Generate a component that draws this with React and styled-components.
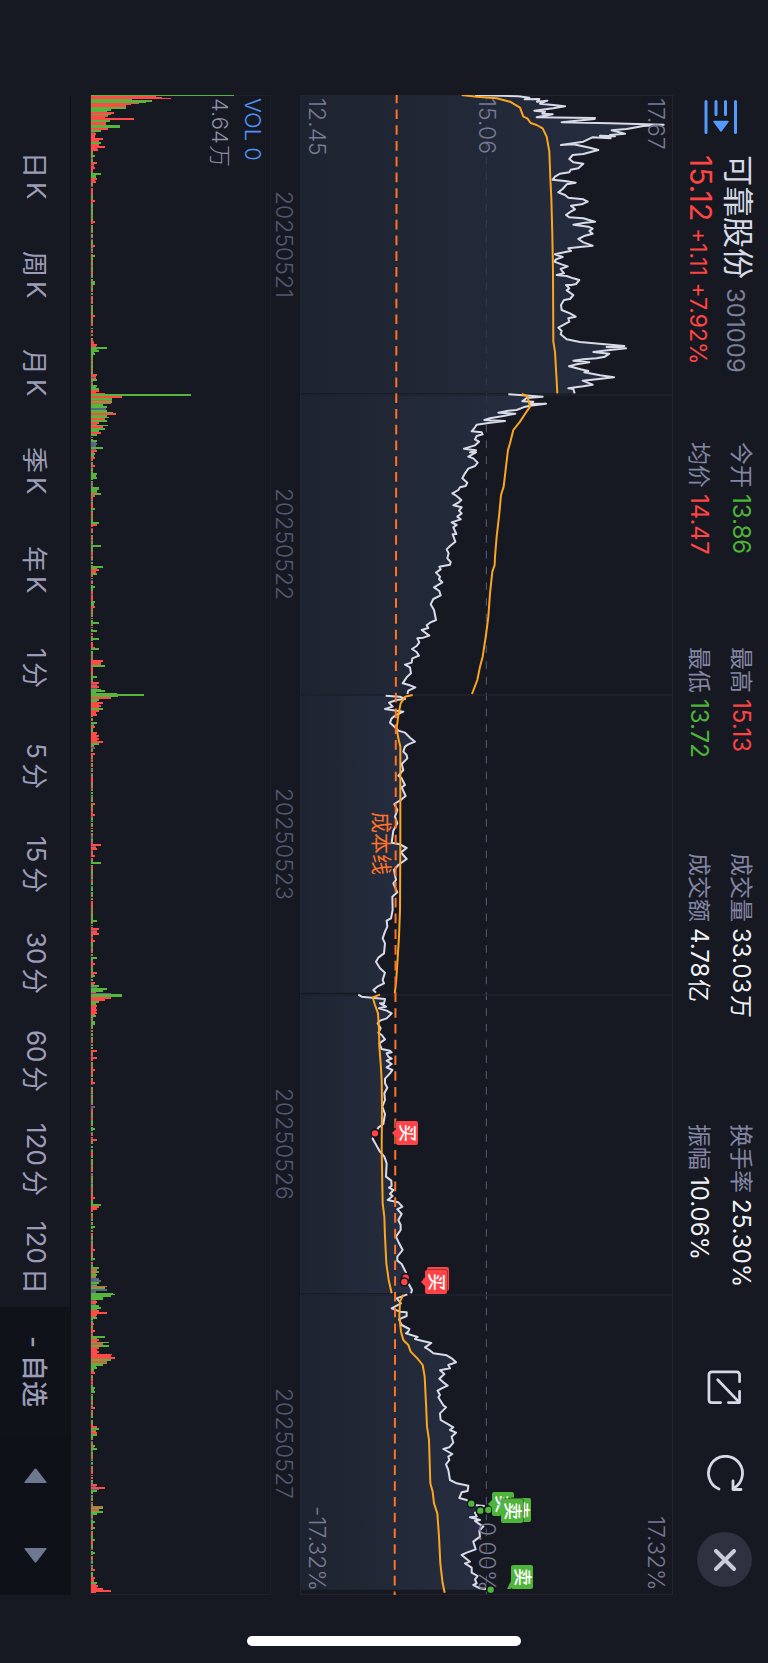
import React from 'react';
import styled, { createGlobalStyle } from 'styled-components';

const GlobalStyle = createGlobalStyle`
  * {
    box-sizing: border-box;
  }

  body {
    margin: 0;
    background: #161922;
  }

  button {
    margin: 0;
    padding: 0;
    border: 0;
    background: none;
    color: inherit;
    font: inherit;
    writing-mode: inherit;
    text-orientation: inherit;
    cursor: pointer;
  }
`;

/* The whole screen reads sideways, the top of the app is the right edge */
const Screen = styled.main`
  position: relative;
  display: flex;
  flex-direction: column;
  width: 100%;
  height: 100vh;
  min-height: 1200px;
  padding: 95px 0 68px;
  overflow: hidden;
  background: #161922;
  color: #d6d9e6;
  font-family: Inter, 'Noto Sans CJK SC', sans-serif;
  writing-mode: vertical-rl;
  text-orientation: sideways;
`;

const Header = styled.header`
  display: flex;
  width: 95px;
  flex: none;
  padding: 5px 0 8px;
`;

const MenuButton = styled.button`
  height: 34px;
  flex: none;

  svg {
    display: block;
  }
`;

const Quote = styled.div`
  height: 287px;
  flex: none;
  margin-top: 21px;
  padding-right: 12px;
  white-space: nowrap;
`;

const QuoteName = styled.h1`
  margin: 0;
  font-size: 31px;
  font-weight: 400;
  line-height: 36px;
`;

const Code = styled.span`
  margin-top: 9px;
  color: #7d7f99;
  font-size: 24px;
`;

const Price = styled.p`
  margin: 0;
  color: #ff4444;
  font-size: 30px;
  line-height: 32px;
`;

const Change = styled.span`
  margin-top: 7px;
  font-size: 23px;
`;

const Stats = styled.dl`
  display: grid;
  flex: 1;
  grid-template-columns: 205fr 206fr 270fr 236fr;
  grid-template-rows: repeat(2, 42px);
  grid-auto-flow: column;
  margin: 0;
  padding-right: 6px;
  line-height: 42px;
  white-space: nowrap;
`;

const Stat = styled.div`
  display: flex;
  gap: 6px;
`;

const StatLabel = styled.dt`
  color: #8486a3;
  font-size: 23px;
`;

const tones = { up: '#ff4444', down: '#4db436', plain: '#f2f2f5' };

const StatValue = styled.dd`
  display: flex;
  gap: 1px;
  margin: 0;
  color: ${(props) => tones[props.$tone]};
  font-size: 24px;
`;

const StatUnit = styled.span`
  font-size: 23px;
`;

const Actions = styled.div`
  display: flex;
  flex: none;
  gap: 31px;
  padding-right: 16px;
`;

const ActionButton = styled.button`
  display: grid;
  place-items: center;
  width: 55px;
  height: 55px;
  border-radius: 50%;
  background: ${(props) => (props.$filled ? '#2f3040' : 'none')};
`;

const ChartPanel = styled.section`
  position: relative;
  flex: 373 0 0;
  min-width: 0;

  svg {
    display: block;
    width: 100%;
    height: 100%;
  }
`;

const AxisLabel = styled.span`
  position: absolute;
  right: ${(props) => props.$right};
  ${(props) => (props.$end ? 'bottom: 4px' : 'top: 3px')};
  color: #787b93;
  font-size: 23px;
  font-weight: 300;
  line-height: 28px;
`;

const CostLabel = styled.span`
  position: absolute;
  left: 18.6%;
  top: 47.8%;
  color: #ff7326;
  font-size: 21px;
  line-height: 24px;
`;

const Tag = styled.span`
  position: absolute;
  left: ${(props) => (props.$x / 373) * 100}%;
  top: ${(props) => (props.$y / 1500) * 100}%;
  width: 22px;
  height: 24px;
  border-radius: 2px;
  background: ${(props) => (props.$side === '买' ? '#ff4448' : '#4fb43a')};
  box-shadow: 0 0 0 1px #16192266;
  color: #fff;
  font-size: 18px;
  font-weight: 500;
  line-height: 22px;
  text-align: center;

  &::before {
    content: '';
    position: absolute;
    right: 100%;
    top: ${(props) => (props.$corner ? '16px' : '8px')};
    border: 4px solid transparent;
    border-left: 0;
    border-right-color: ${(props) => (props.$side === '买' ? '#ff4448' : '#4fb43a')};
    ${(props) => props.$corner && 'border-bottom: 0; border-top-width: 8px;'}
  }
`;

const DateAxis = styled.ol`
  display: flex;
  width: 29px;
  flex: none;
  margin: 0;
  padding: 0 2px 2px 0;
  list-style: none;
  color: #555870;
  font-size: 23px;
  font-weight: 300;
  line-height: 28px;
`;

const DateItem = styled.li`
  flex: 1;
  text-align: center;
`;

const VolumePanel = styled.section`
  position: relative;
  flex: 181 0 0;
  min-width: 0;
  box-shadow: inset 0 0 0 1px #1e212d;

  svg {
    display: block;
    width: 100%;
    height: 100%;
  }
`;

const VolumeInfo = styled.div`
  position: absolute;
  top: 3px;
  right: 2px;
  color: #8e90a8;
  font-size: 22px;
  font-weight: 300;
  line-height: 33px;
`;

const VolumeName = styled.div`
  color: #4f93f5;
`;

const VolumeScale = styled.div`
  display: flex;
  gap: 1px;
`;

const PeriodBar = styled.nav`
  display: flex;
  width: 71px;
  flex: none;
  margin-right: 19px;
  border-right: 1px solid #0e1016;
  color: #9b9db8;
  font-size: 26px;
`;

const Periods = styled.div`
  display: flex;
  flex: 1180 0 0;
  margin-top: 32px;
`;

const Period = styled.button`
  display: flex;
  flex: 1 0 0;
  align-items: center;
  justify-content: center;
  gap: 4px;
  padding-left: 3px;
  white-space: nowrap;
`;

const Watchlist = styled.button`
  flex: 128 0 0;
  padding-left: 3px;
  background: #101219;
  font-weight: 500;
  white-space: nowrap;
`;

const StepButton = styled.button`
  display: grid;
  flex: 80 0 0;
  place-items: center;
  background: #0f1118;
`;

const HomeIndicator = styled.div`
  position: absolute;
  bottom: 17px;
  left: 50%;
  width: 274px;
  height: 10px;
  margin-left: -137px;
  border-radius: 5px;
  background: #fff;
`;

const stats = [
  { label: '今开', value: '13.86', tone: 'down' },
  { label: '均价', value: '14.47', tone: 'up' },
  { label: '最高', value: '15.13', tone: 'up' },
  { label: '最低', value: '13.72', tone: 'down' },
  { label: '成交量', value: '33.03', unit: '万', tone: 'plain' },
  { label: '成交额', value: '4.78', unit: '亿', tone: 'plain' },
  { label: '换手率', value: '25.30%', tone: 'plain' },
  { label: '振幅', value: '10.06%', tone: 'plain' },
];

const periods = [
  ['日', 'K'],
  ['周', 'K'],
  ['月', 'K'],
  ['季', 'K'],
  ['年', 'K'],
  ['1', '分'],
  ['5', '分'],
  ['15', '分'],
  ['30', '分'],
  ['60', '分'],
  ['120', '分'],
  ['120', '日'],
];

// One entry a day. A day is 900 units long, the panel 1119 units deep.
// Volume bars are written as position, colour (r, g, n) and length.
const days = [
  {
    date: '20250521',
    start: -15,
    price:
      '555,30 685,34 718,38 704,43 748,42 741,50 772,47 750,56 790,60 825,64 790,70 733,77 765,80 757,86 788,88 740,97 915,99 880,105 914,102 815,112 960,115 1121,119 1060,123 1010,132 965,136 1005,146 960,150 975,154 930,152 962,160 907,157 880,170 813,180 850,178 900,188 925,195 880,207 848,210 838,222 850,232 880,236 865,250 842,254 838,262 810,266 795,275 788,284 825,288 857,293 830,298 818,312 805,322 825,330 835,338 880,343 893,350 875,358 843,362 855,373 842,380 828,390 838,397 880,400 915,410 885,413 850,419 895,425 908,431 898,438 908,446 885,452 865,462 880,472 908,482 870,486 835,490 843,498 830,500 795,508 818,516 798,523 793,530 815,538 833,544 812,552 822,565 800,570 830,573 850,580 868,585 858,597 845,600 828,600 838,610 830,616 850,630 840,642 822,645 813,660 815,675 840,685 857,695 835,700 838,710 805,728 815,738 812,748 830,763 870,771 1003,783 950,786 1008,790 940,797 910,801 958,806 945,815 920,820 880,823 850,827 898,832 860,838 837,844 872,853 895,858 883,862 930,871 972,877 920,883 878,887 908,899 880,904 835,910 850,912 854,925',
    average:
      '515,30 560,35 620,40 660,50 690,68 700,95 712,100 722,114 740,120 758,130 770,155 778,200 781,280 784,340 787,450 789,560 790,770 795,800 799,870 802,925',
    volume:
      '0g143 1r65 2r71 3r80 4g41 5g61 6g61 7g55 8r48 9r40 10r35 11r35 12g35 14g20 17r23 19g20 20r17 23r43 25g19 27r15 28r15 30g29 31g29 33r17 35g10 38r5 43r12 47g10 51r14 54r7 60g4 67r6 72r4 78g10 83r6 86r5 97r2 105r4 126r4 150r4 160g4 186g4 188g4 220r4 245r2 249r6 252g16 255g8 258g4 270g2 279r6 284g6 290g6 293g8 295r8',
  },
  {
    date: '20250522',
    start: 900,
    price:
      '655,13 700,16 758,20 710,24 697,34 730,35 720,42 768,41 720,47 700,52 680,60 655,62 625,68 676,71 640,78 600,85 583,90 645,93 600,98 560,104 555,112 545,124 575,127 578,133 560,138 555,148 567,155 555,166 522,176 558,181 540,187 558,187 535,200 550,205 563,218 555,228 535,236 525,250 517,265 532,278 527,288 510,292 505,300 487,310 500,318 514,330 505,338 490,346 515,352 507,362 515,370 502,380 512,388 485,397 500,405 490,412 499,432 488,433 496,455 480,468 470,478 476,490 472,505 482,516 480,524 448,530 452,538 438,548 450,560 447,568 457,577 432,592 448,603 452,616 430,627 422,643 432,660 438,690 420,698 410,706 415,714 395,720 418,737 400,743 382,745 388,757 380,768 366,777 380,786 387,797 367,805 365,818 345,824 360,832 363,850 350,862 338,880 360,886 376,892 355,902 352,912',
    average:
      '695,12 712,18 720,50 705,72 690,95 670,120 660,160 654,180 648,230 641,290 633,315 628,370 620,440 615,500 614,525 607,545 600,610 595,680 588,735 578,800 570,830 562,870 546,912',
    volume:
      '-2r14 -1g100 0g100 1r31 3g21 5r21 6g21 8r20 9g12 11g16 13n15 15g16 17g22 18r25 20g16 22g18 23r14 25g16 27r8 30g17 31r12 33g14 35g8 37r10 39g6 45g6 48n6 52g12 55r6 58g4 62r4 70r4 78g6 82g6 92g8 93g8 98g10 100r4 113g4 127g8 129r6 150g10 171g12 174r8 178g6 191g4 206g4 211r4 227g8 235g6 243g8 252r4 253g8 265r12 270g14 281g6 287r8 291r8 294g10 295g14',
  },
  {
    date: '20250523',
    start: 1800,
    price:
      '287,17 330,20 345,27 320,30 297,38 308,50 285,57 340,65 318,75 305,85 300,98 315,112 325,122 345,128 352,135 360,143 375,155 355,163 345,170 340,185 350,195 352,205 335,222 340,240 325,257 335,265 345,285 335,292 347,318 335,328 313,342 322,360 315,380 322,400 310,422 305,458 330,463 350,474 333,487 350,507 325,525 312,540 318,570 310,580 322,607 307,620 308,660 303,685 290,692 292,710 285,725 278,745 285,760 282,790 265,803 258,815 270,835 285,848 278,870 282,880 262,890 250,900 258,908',
    average:
      '368,15 345,20 332,40 325,75 320,115 325,145 331,170 331,330 331,480 330,660 327,740 322,820 318,880 314,910',
    volume:
      '-2g26 -1g53 0g53 1g27 2r20 4g8 7r12 10r10 13g12 15r8 19r6 27g6 31r4 37r6 40r8 43r8 46r12 48g8 52n4 58r4 108r4 119r4 149r10 153r6 160r4 167g10 225g6 233r8 238r8 245r4 262g6 268r4 277r6 280g4 287r4 290g8 293g16 295g12',
  },
  {
    date: '20250526',
    start: 2700,
    price:
      '205,14 215,20 285,27 282,40 270,40 288,50 267,55 290,62 305,70 290,85 270,92 263,100 272,115 265,128 275,135 285,148 268,160 275,177 300,182 305,187 290,190 295,200 305,206 290,212 305,222 290,232 307,240 300,250 285,266 285,280 292,293 283,310 285,330 277,350 285,372 280,402 265,413 255,430 248,446 270,485 283,500 290,520 288,560 304,572 305,588 297,593 310,600 300,612 308,618 293,630 325,637 337,650 322,658 335,672 325,690 332,705 332,720 318,740 325,755 338,780 322,800 322,812 335,822 348,848 345,870 358,885 366,900 363,910',
    average:
      '270,14 248,22 255,45 264,70 267,120 268,170 272,220 275,270 276,350 275,480 278,640 283,680 285,740 289,820 296,870 305,910',
    volume:
      '-2n20 -1g31 0g31 2r20 4r14 6g8 10r6 14r6 17r6 20g5 26g4 28g4 55r6 62r6 74r4 87r4 111n4 133g4 144r6 202r4 209g10 211r8 213r6 231g4 254r4 263g4 272g8 274r6 276g8 279g6 283n8 285n10 287g8 291r16 292g14 294n16',
  },
  {
    date: '20250527',
    start: 3600,
    price:
      '352,13 320,25 333,40 305,55 330,65 350,67 350,78 327,88 335,105 358,117 355,125 348,130 383,141 375,147 395,152 424,159 405,172 418,180 430,190 470,196 485,205 498,217 475,225 480,235 450,241 463,252 448,266 460,277 473,287 455,295 443,302 450,315 445,322 460,346 468,352 450,370 452,390 470,400 490,412 480,420 498,428 485,440 490,458 478,472 460,477 487,492 475,500 478,510 468,523 475,540 480,570 500,580 535,587 533,603 515,607 508,624 530,630 544,640 560,646 582,648 571,662 555,668 560,680 540,682 570,690 555,693 565,700 580,710 568,722 570,740 550,755 557,778 530,788 515,795 540,815 525,820 545,833 545,848 563,858 555,868 560,880 550,885 570,895 600,899',
    average:
      '340,14 330,35 328,80 333,125 340,150 355,165 362,185 382,205 398,225 404,260 408,340 411,410 417,450 421,580 428,605 432,640 442,670 447,740 451,820 458,880 464,908',
    volume:
      '-2g22 -1g24 0g20 2g12 3g12 6r6 10g8 12g10 15r8 17r16 19r6 22g6 28r3 35r4 41g14 44r8 47g18 48r12 50g18 52r8 56r8 59r21 60r20 62r24 64g20 66r16 68g16 69g12 72g6 77r4 92g4 96g4 112r4 131r6 133g8 137r6 139g6 150g4 153g6 189r6 192r14 194n8 195g6 211r12 212g12 214r8 216g12 218g6 226g4 232g4 244g4 257g4 274r4 282r4 287g6 290r7 293r12 295r20',
  },
];

const tags = [
  { side: '买', x: 96, y: 1026 },
  { side: '买', x: 127, y: 1172 },
  { side: '买', x: 125, y: 1175 },
  { side: '卖', x: 192, y: 1397 },
  { side: '卖', x: 209, y: 1403 },
  { side: '卖', x: 201, y: 1404 },
  { side: '卖', x: 211, y: 1470, corner: true },
];

const dots = [
  { side: '买', x: 255, y: 3130 },
  { side: '买', x: 347, y: 3563 },
  { side: '买', x: 343, y: 3576 },
  { side: '卖', x: 544, y: 4241 },
  { side: '卖', x: 571, y: 4262 },
  { side: '卖', x: 595, y: 4260 },
  { side: '卖', x: 602, y: 4499 },
];

const barColors = { r: '#ff4a48', g: '#55b53c', n: '#5d6580' };

// Fills the minutes between two listed bars, small trades where they are far apart
const volumeBars = (text, seed) => {
  const known = text.split(' ').map((item) => {
    const [, at, color, size] = item.match(/(-?\d+)([rgn])(\d+)/);
    return { at: Number(at), color, size: Number(size), thickness: 1 };
  });
  const bars = [];
  let state = seed;
  const next = () => {
    state = (state * 16807) % 2147483647;
    return state / 2147483647;
  };
  known.forEach((bar, index) => {
    const after = known[index + 1] || { at: 298, size: 6 };
    const near = after.at - bar.at < 6;
    for (let at = bar.at + 1; at < after.at; at += 1) {
      const roll = next();
      const size = near ? Math.max(3, Math.round(Math.min(bar.size, after.size) * 0.8)) : 2;
      let color = roll < 0.5 ? 'g' : 'r';
      if (roll > 0.92) color = 'n';
      if (near && roll < 0.7) color = bar.color;
      if (near || next() > 0.12) bars.push({ at, color, size, thickness: 1 });
    }
    if (after.at - bar.at > 1) bar.thickness = 2;
  });
  return [...bars, ...known];
};

const areaPoints = (points) => {
  const list = points.split(' ');
  const first = list[0].split(',')[1];
  const last = list[list.length - 1].split(',')[1];
  return `30,${first} ${points} 30,${last}`;
};

const PriceChart = () => (
  <svg viewBox="30 15 1119 4500" preserveAspectRatio="none" aria-hidden="true">
    <defs>
      <linearGradient id="area">
        <stop offset="0" stopColor="#232b38" stopOpacity="0.6" />
        <stop offset="1" stopColor="#2a3248" stopOpacity="0.85" />
      </linearGradient>
    </defs>
    <line x1="589" y1="15" x2="589" y2="4515" stroke="#5a5d78" strokeWidth="3" strokeDasharray="23 24.3" strokeDashoffset="4" />
    {days.map((day) => (
      <polygon key={day.date} points={areaPoints(day.price)} fill="url(#area)" transform={`translate(0 ${day.start})`} />
    ))}
    <path d="M31 915H1146M31 1815H1146M31 2715H1146M31 3615H1146" stroke="#20232f" strokeWidth="4" />
    <rect x="31.5" y="16.5" width="1116" height="4497" fill="none" stroke="#222531" strokeWidth="3" />
    {days.map((day) => (
      <g key={day.date} transform={`translate(0 ${day.start})`} fill="none" strokeLinejoin="round">
        <polyline points={day.price} stroke="#d9dce8" strokeWidth="6" />
        <polyline points={day.average} stroke="#fca61f" strokeWidth="6" />
      </g>
    ))}
    <line x1="320" y1="15" x2="314" y2="4515" stroke="#ff7326" strokeWidth="6" strokeDasharray="29 18.3" strokeDashoffset="4" />
    {dots.map((dot) => (
      <circle
        key={`${dot.x}-${dot.y}`}
        cx={dot.x}
        cy={dot.y}
        r="12"
        fill={dot.side === '买' ? '#ff4448' : '#4fb43a'}
        stroke="#12141c"
        strokeWidth="5"
      />
    ))}
  </svg>
);

const VolumeChart = () => (
  <svg viewBox="0 0 181 1500" preserveAspectRatio="none" shapeRendering="crispEdges" aria-hidden="true">
    <line x1="0.5" y1="0" x2="0.5" y2="1500" stroke="#252936" />
    {days.map((day, index) => (
      <g key={day.date} transform={`translate(1 ${index * 300})`}>
        {volumeBars(day.volume, 71 + index * 13).map((bar) => (
          <rect key={bar.at} x="0" y={bar.at} width={bar.size} height={bar.thickness} fill={barColors[bar.color]} />
        ))}
      </g>
    ))}
  </svg>
);

const MenuIcon = () => (
  <svg width="36" height="34" viewBox="0 0 36 34" fill="none" stroke="#549bff" strokeWidth="3" strokeLinecap="round">
    <path d="M3 1.5V32.5M13 1.5V14.5M22.5 1.5V14.5M32.5 1.5V32.5" />
    <path d="M11 21.5H25L18 31Z" fill="#549bff" strokeWidth="1.5" strokeLinejoin="round" />
  </svg>
);

const ExportIcon = () => (
  <svg width="35" height="35" viewBox="0 0 36 36" fill="none" stroke="#d6d9e6" strokeWidth="2.8" strokeLinecap="round" strokeLinejoin="round">
    <path d="M33.5 12V5Q33.5 2 30.5 2H5Q2 2 2 5V30.5Q2 33.5 5 33.5H14" />
    <path d="M11 10L33.5 33.5M22 33.5H33.5V22" />
  </svg>
);

const RefreshIcon = () => (
  <svg width="38" height="38" viewBox="0 0 38 38" fill="none" stroke="#d6d9e6" strokeWidth="2.8" strokeLinecap="round" strokeLinejoin="round">
    <path d="M13 34A17 17 0 1 1 28 33" />
    <path d="M27 26V34.5H35" />
  </svg>
);

const CloseIcon = () => (
  <svg width="22" height="22" viewBox="0 0 22 22" stroke="#c9ccda" strokeWidth="4" strokeLinecap="round">
    <path d="M2 2L20 20M20 2L2 20" />
  </svg>
);

const StepIcon = ({ down }) => (
  <svg width="23" height="15" viewBox="0 0 23 15" fill="#6e7890">
    <path d={down ? 'M1 0H22Q23 0 22.5 1L12.5 14Q11.5 15 10.5 14L0.5 1Q0 0 1 0Z' : 'M1 15H22Q23 15 22.5 14L12.5 1Q11.5 0 10.5 1L0.5 14Q0 15 1 15Z'} />
  </svg>
);

const App = () => (
  <>
    <GlobalStyle />
    <Screen>
      <Header>
        <MenuButton aria-label="Stock list">
          <MenuIcon />
        </MenuButton>
        <Quote>
          <QuoteName>
            可靠股份<Code>301009</Code>
          </QuoteName>
          <Price>
            15.12<Change>+1.11 +7.92%</Change>
          </Price>
        </Quote>
        <Stats>
          {stats.map((stat) => (
            <Stat key={stat.label}>
              <StatLabel>{stat.label}</StatLabel>
              <StatValue $tone={stat.tone}>
                {stat.value}
                {stat.unit && <StatUnit>{stat.unit}</StatUnit>}
              </StatValue>
            </Stat>
          ))}
        </Stats>
        <Actions>
          <ActionButton aria-label="Open">
            <ExportIcon />
          </ActionButton>
          <ActionButton aria-label="Refresh">
            <RefreshIcon />
          </ActionButton>
          <ActionButton $filled aria-label="Close">
            <CloseIcon />
          </ActionButton>
        </Actions>
      </Header>

      <ChartPanel>
        <PriceChart />
        <AxisLabel $right="3px">17.67</AxisLabel>
        <AxisLabel $right="46%">15.06</AxisLabel>
        <AxisLabel $right="342px">12.45</AxisLabel>
        <AxisLabel $right="3px" $end>17.32%</AxisLabel>
        <AxisLabel $right="46%" $end>0.00%</AxisLabel>
        <AxisLabel $right="342px" $end>-17.32%</AxisLabel>
        <CostLabel>成本线</CostLabel>
        {tags.map((tag) => (
          <Tag key={`${tag.x}-${tag.y}`} $side={tag.side} $x={tag.x} $y={tag.y} $corner={tag.corner}>
            {tag.side}
          </Tag>
        ))}
      </ChartPanel>

      <DateAxis>
        {days.map((day) => (
          <DateItem key={day.date}>{day.date}</DateItem>
        ))}
      </DateAxis>

      <VolumePanel>
        <VolumeChart />
        <VolumeInfo>
          <VolumeName>VOL 0</VolumeName>
          <VolumeScale>
            4.64<span>万</span>
          </VolumeScale>
        </VolumeInfo>
      </VolumePanel>

      <PeriodBar>
        <Periods>
          {periods.map(([first, second]) => (
            <Period key={first + second}>
              <span>{first}</span>
              <span>{second}</span>
            </Period>
          ))}
        </Periods>
        <Watchlist>- 自选</Watchlist>
        <StepButton aria-label="Previous">
          <StepIcon />
        </StepButton>
        <StepButton aria-label="Next">
          <StepIcon down />
        </StepButton>
      </PeriodBar>
      <HomeIndicator />
    </Screen>
  </>
);

export default App;
